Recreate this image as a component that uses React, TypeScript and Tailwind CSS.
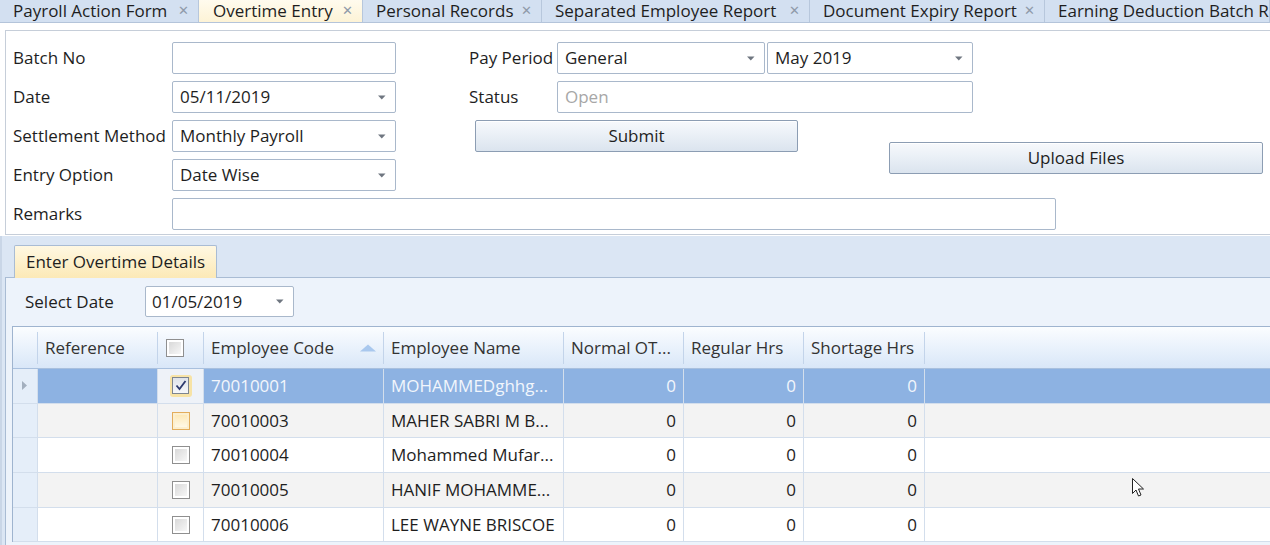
import React from 'react'

const tabs = [
  { label: 'Payroll Action Form', width: 'w-[199px]', active: false },
  { label: 'Overtime Entry', width: 'w-[164px]', active: true },
  { label: 'Personal Records', width: 'w-[179px]', active: false },
  { label: 'Separated Employee Report', width: 'w-[268px]', active: false },
  { label: 'Document Expiry Report', width: 'w-[235px]', active: false },
  { label: 'Earning Deduction Batch Report', width: 'flex-1 overflow-hidden', active: false, noClose: true },
]

const rows = [
  { code: '70010001', name: 'MOHAMMEDghhg...', selected: true, check: 'checked' },
  { code: '70010003', name: 'MAHER SABRI M B...', alt: true, check: 'hover' },
  { code: '70010004', name: 'Mohammed Mufar...', check: 'none' },
  { code: '70010005', name: 'HANIF MOHAMME...', alt: true, check: 'none' },
  { code: '70010006', name: 'LEE WAYNE BRISCOE', check: 'none' },
]

function Arrow() {
  return (
    <svg width="8" height="5" viewBox="0 0 8 5" className="shrink-0">
      <path d="M0 0.5h7.5L3.75 4.5z" fill="#6f7680" />
    </svg>
  )
}

function Select({ value, width }: { value: string; width: string }) {
  return (
    <div className={`${width} h-[32px] flex items-center justify-between pl-[7px] pr-[9px] border border-[#a9b8cb] rounded-[2px] bg-white`}>
      <span>{value}</span>
      <Arrow />
    </div>
  )
}

function Input({ width, value, muted }: { width: string; value?: string; muted?: boolean }) {
  return (
    <div className={`${width} h-[32px] flex items-center pl-[7px] border border-[#a9b8cb] rounded-[2px] bg-white ${muted ? 'text-[#a7a7a7]' : ''}`}>
      {value}
    </div>
  )
}

function Button({ label, width, extra }: { label: string; width: string; extra?: string }) {
  return (
    <div className={`${width} ${extra ?? ''} h-[32px] flex items-center justify-center border border-[#8c9db3] rounded-[2px] bg-gradient-to-b from-[#f7f9fc] via-[#e9eff6] to-[#dbe4ee] shadow-[inset_0_1px_0_#ffffff]`}>
      {label}
    </div>
  )
}

function Field({ label, children }: { label: string; children: React.ReactNode }) {
  return (
    <div className="flex items-center h-[32px]">
      <span className="w-[159px] shrink-0 whitespace-nowrap">{label}</span>
      {children}
    </div>
  )
}

function CheckBox({ state }: { state: string }) {
  if (state === 'checked') {
    return (
      <div className="w-[22px] h-[22px] rounded-[3px] bg-[#f7e3a6] flex items-center justify-center">
        <div className="w-[17px] h-[17px] border border-[#7d8590] bg-gradient-to-b from-[#dfe3ea] to-[#f5f7fa] flex items-center justify-center">
          <svg width="12" height="11" viewBox="0 0 12 11">
            <path d="M1.5 5.5 L4.5 9 L10.5 1" stroke="#2d3a6e" strokeWidth="1.8" fill="none" />
          </svg>
        </div>
      </div>
    )
  }
  if (state === 'hover') {
    return (
      <div className="w-[18px] h-[18px] border border-[#e3ad5c] p-[2px] bg-[#fcefcf]">
        <div className="w-full h-full bg-gradient-to-b from-[#fde9b8] to-[#fff8e6]" />
      </div>
    )
  }
  return (
    <div className="w-[18px] h-[18px] border border-[#8f8f8f] p-[2px] bg-white">
      <div className="w-full h-full bg-gradient-to-br from-[#d9d9d9] to-[#f7f7f7]" />
    </div>
  )
}

function HeaderCell({ label, width, sort }: { label?: string; width: string; sort?: boolean }) {
  return (
    <div className={`${width} shrink-0 flex items-center justify-between`}>
      <span className="pl-[7px] whitespace-nowrap">{label}</span>
      <div className="flex items-center">
        {sort && (
          <svg width="16" height="8" viewBox="0 0 16 8" className="mr-[7px]">
            <path d="M0 7.5 L8 0.5 L16 7.5z" fill="#a9c8ee" />
          </svg>
        )}
        <div className="w-px h-[32px] bg-[#c3d4ea]" />
      </div>
    </div>
  )
}

export default function App() {
  return (
    <div className="relative w-[1270px] h-[545px] overflow-hidden bg-white font-['Open_Sans',sans-serif] text-[17px] text-[#1e1e1e]">
      {/* document tabs */}
      <div className="flex h-[23px] bg-[#d3e0f1] border-b border-[#b4c4da]">
        {tabs.map((t) => (
          <div
            key={t.label}
            className={`${t.width} shrink-0 flex items-start h-full border-r border-[#b7c7dc] pl-[13px] pr-[9px] whitespace-nowrap ${
              t.active ? 'bg-gradient-to-b from-[#fffbee] to-[#fdf3d6] pl-[14px]' : ''
            }`}
          >
            <span className="leading-[22px]">{t.label}</span>
            {!t.noClose && <span className="ml-auto leading-[21px] text-[13px] text-[#8f9aa9]">✕</span>}
          </div>
        ))}
      </div>

      {/* header form */}
      <div className="pt-[7px]">
        <div className="ml-[5px] border border-r-0 border-[#c6ced9] pt-[11px] pb-[4px] pl-[7px] flex flex-col gap-[7px]">
          <div className="flex items-center">
            <Field label="Batch No">
              <Input width="w-[224px]" />
            </Field>
            <span className="ml-[73px] w-[88px] whitespace-nowrap">Pay Period</span>
            <Select value="General" width="w-[208px]" />
            <div className="ml-[2px]">
              <Select value="May 2019" width="w-[206px]" />
            </div>
          </div>
          <div className="flex items-center">
            <Field label="Date">
              <Select value="05/11/2019" width="w-[224px]" />
            </Field>
            <span className="ml-[73px] w-[88px]">Status</span>
            <Input width="w-[416px]" value="Open" muted />
          </div>
          <div className="flex">
            <div className="flex flex-col gap-[7px]">
              <Field label="Settlement Method">
                <Select value="Monthly Payroll" width="w-[224px]" />
              </Field>
              <Field label="Entry Option">
                <Select value="Date Wise" width="w-[224px]" />
              </Field>
            </div>
            <Button label="Submit" width="w-[323px]" extra="ml-[79px]" />
            <Button label="Upload Files" width="w-[374px]" extra="ml-[91px] mt-[22px]" />
          </div>
          <Field label="Remarks">
            <Input width="w-[884px]" />
          </Field>
        </div>
      </div>

      {/* details tab */}
      <div className="mt-[1px] h-[400px] bg-[#dbe6f4] border-l-[2px] border-[#c9d6e7] pl-[1px]">
        <div className="pt-[9px] pl-[11px] flex">
          <div className="w-[203px] h-[33px] flex items-center pl-[11px] border border-b-0 border-[#a9bcd4] rounded-t-[2px] bg-gradient-to-b from-[#fff8e2] to-[#fce9b6]">
            Enter Overtime Details
          </div>
        </div>
        <div className="-mt-px ml-[2px] h-[300px] border border-r-0 border-[#a9bcd4] bg-[#edf3fb] pl-[6px]">
          <div className="flex items-center pt-[8px] pl-[13px]">
            <span className="w-[120px]">Select Date</span>
            <div className="w-[149px] h-[31px] flex items-center justify-between pl-[6px] pr-[9px] border border-[#a9b8cb] rounded-[2px] bg-white">
              <span>01/05/2019</span>
              <Arrow />
            </div>
          </div>

          {/* grid */}
          <div className="mt-[9px] border-t border-l border-[#9fb4cf] bg-white">
            <div className="flex h-[42px] bg-gradient-to-b from-[#fbfdff] to-[#d9e7f8] border-b border-[#a9c0de] text-[#333]">
              <HeaderCell width="w-[25px]" />
              <HeaderCell label="Reference" width="w-[120px]" />
              <div className="w-[46px] shrink-0 flex items-center justify-between">
                <div className="ml-[8px]">
                  <CheckBox state="none" />
                </div>
                <div className="w-px h-[32px] bg-[#c3d4ea]" />
              </div>
              <HeaderCell label="Employee Code" width="w-[180px]" sort />
              <HeaderCell label="Employee Name" width="w-[180px]" />
              <HeaderCell label="Normal OT..." width="w-[120px]" />
              <HeaderCell label="Regular Hrs" width="w-[120px]" />
              <HeaderCell label="Shortage Hrs" width="w-[121px]" />
            </div>
            {rows.map((r) => {
              const bg = r.selected ? 'bg-[#8db2e2] text-[#f2f6fc]' : r.alt ? 'bg-[#f3f3f3]' : 'bg-white'
              const cell = 'shrink-0 h-full flex items-center border-r border-[#d3deec]'
              return (
                <div key={r.code} className="flex h-[34.7px] border-b border-[#d3deec]">
                  <div className={`w-[25px] ${cell} bg-[#e5eef9] pl-[9px]`}>
                    {r.selected && (
                      <svg width="5" height="9" viewBox="0 0 5 9">
                        <path d="M0 0 L5 4.5 L0 9z" fill="#a3afbe" />
                      </svg>
                    )}
                  </div>
                  <div className={`w-[120px] ${cell} ${bg}`} />
                  <div className={`w-[46px] ${cell} justify-center ${r.selected ? 'bg-[#eef2f8]' : r.alt ? 'bg-[#f3f3f3]' : 'bg-white'}`}>
                    <CheckBox state={r.check} />
                  </div>
                  <div className={`w-[180px] ${cell} ${bg} pl-[7px]`}>{r.code}</div>
                  <div className={`w-[180px] ${cell} ${bg} pl-[7px] whitespace-nowrap overflow-hidden`}>{r.name}</div>
                  <div className={`w-[120px] ${cell} ${bg} justify-end pr-[7px]`}>0</div>
                  <div className={`w-[120px] ${cell} ${bg} justify-end pr-[7px]`}>0</div>
                  <div className={`w-[121px] ${cell} ${bg} justify-end pr-[7px]`}>0</div>
                  <div className={`flex-1 h-full ${bg}`} />
                </div>
              )
            })}
          </div>
        </div>
      </div>

      {/* mouse pointer */}
      <svg className="absolute left-[1132px] top-[478px]" width="13" height="20" viewBox="0 0 13 20">
        <path d="M0.5 0.5 L0.5 15.5 L4 12 L6.5 18 L9 17 L6.5 11 L11.5 11 Z" fill="#ffffff" stroke="#222" strokeWidth="1" />
      </svg>
    </div>
  )
}
